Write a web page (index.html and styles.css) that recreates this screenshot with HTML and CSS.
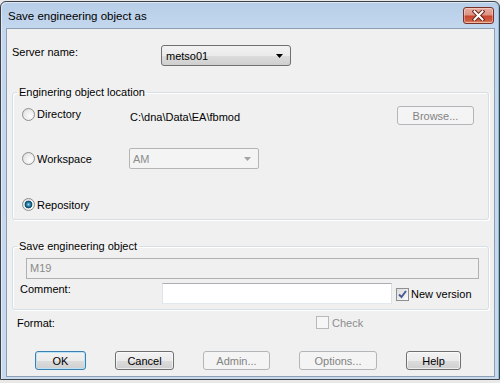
FILE: index.html
```html
<!DOCTYPE html>
<html>
<head>
<meta name="viewport" content="width=device-width, initial-scale=1">
<link rel="stylesheet" href="styles.css">
</head>
<body>

<div class="window">
  <div class="titlebar">
    <span class="title">Save engineering object as</span>
    <button class="close">
      <svg width="13" height="11" viewBox="0 0 13 11">
        <path d="M2.5 1.5 L10.5 9.5 M10.5 1.5 L2.5 9.5" stroke="#6a2418" stroke-width="4" stroke-linecap="square"/>
        <path d="M2.5 1.5 L10.5 9.5 M10.5 1.5 L2.5 9.5" stroke="#ffffff" stroke-width="2" stroke-linecap="square"/>
      </svg>
    </button>
  </div>

  <div class="client">
    <div class="server-row">
      <label class="server-label">Server name:</label>
      <div class="combo">
        <span>metso01</span>
        <svg class="arrow" width="7" height="4" viewBox="0 0 7 4"><polygon points="0,0 7,0 3.5,4" fill="#000"/></svg>
      </div>
    </div>

    <!-- Location group -->
    <fieldset class="group location">
      <legend>Enginering object location</legend>
      <div class="loc-row dir">
        <div class="opt"><span class="radio"></span><span class="opt-label">Directory</span></div>
        <span class="path">C:\dna\Data\EA\fbmod</span>
        <button class="btn disabled browse">Browse...</button>
      </div>
      <div class="loc-row ws">
        <div class="opt"><span class="radio"></span><span class="opt-label">Workspace</span></div>
        <div class="combo disabled">
          <span>AM</span>
          <svg class="arrow" width="7" height="4" viewBox="0 0 7 4"><polygon points="0,0 7,0 3.5,4" fill="#a3a3a3"/></svg>
        </div>
      </div>
      <div class="loc-row repo">
        <div class="opt"><span class="radio checked"></span><span class="opt-label">Repository</span></div>
      </div>
    </fieldset>

    <!-- Save group -->
    <fieldset class="group save">
      <legend>Save engineering object</legend>
      <div class="textbox disabled name">M19</div>
      <div class="comment-row">
        <label class="comment-label">Comment:</label>
        <div class="textbox comment"></div>
        <span class="check checked">
          <svg width="11" height="11" viewBox="0 0 11 11"><path d="M2 5.5 L4.5 8 L9 2" stroke="#4a5c96" stroke-width="2" fill="none"/></svg>
        </span>
        <span class="check-label">New version</span>
      </div>
    </fieldset>

    <div class="format-row">
      <label class="format-label">Format:</label>
      <span class="check disabled"></span>
      <span class="check-label disabled">Check</span>
    </div>

    <div class="buttons">
      <button class="btn default ok">OK</button>
      <button class="btn cancel">Cancel</button>
      <button class="btn disabled admin">Admin...</button>
      <button class="btn disabled options">Options...</button>
      <button class="btn help">Help</button>
    </div>
  </div>
</div>

</body>
</html>
```

FILE: styles.css
```css
body {
  margin: 0;
  background: #e9e9e9;
  font-family: "Liberation Sans", Arial, sans-serif;
  font-size: 11px;
  color: #000;
}

/* Window frame */
.window {
  margin-top: 1px;
  width: 500px;
  height: 379px;
  box-sizing: border-box;
  border: 1px solid #3d4249;
  border-radius: 6px 6px 0 0;
  background: linear-gradient(#b7cee8, #c3d7ee 26px, #c8daef);
  box-shadow: inset -1px 0 0 #86bddc, inset 1px 1px 0 rgba(255,255,255,0.5);
  display: flex;
  flex-direction: column;
  padding-bottom: 2px;
}

.titlebar {
  height: 26px;
  display: flex;
  align-items: flex-start;
  padding: 0 5px 0 7px;
}

.title {
  margin-top: 7px;
  font-size: 11.5px;
  line-height: 14px;
  color: #000;
}

.close {
  margin-left: auto;
  margin-top: 5px;
  width: 31px;
  height: 17px;
  padding: 0;
  border: 1px solid #7a3127;
  border-radius: 3px;
  background: linear-gradient(#e9ab9f 0, #dd9384 45%, #c8462f 55%, #cf5d41 85%, #e2a07d 100%);
  box-shadow: inset 0 0 0 1px rgba(255,255,255,0.35);
  display: flex;
  align-items: center;
  justify-content: center;
}

/* Client area */
.client {
  margin: 0 4px 0 5px;
  height: 349px;
  box-sizing: border-box;
  border: 1px solid #8e9fb3;
  background: #f0f0f0;
  padding: 16px 5px 0 5px;
}

.server-row {
  display: flex;
  align-items: flex-start;
  line-height: 14px;
}

.server-label {
  width: 149px;
}

/* Combo boxes */
.combo {
  width: 130px;
  height: 21px;
  box-sizing: border-box;
  border: 1px solid #707070;
  border-radius: 3px;
  background: linear-gradient(#f2f2f2 0, #ebebeb 50%, #dddddd 50%, #cfcfcf 100%);
  display: flex;
  align-items: center;
  padding: 0 7px 0 4px;
}

.combo .arrow {
  margin-left: auto;
}

.combo.disabled {
  border-color: #b5b5b5;
  background: #f4f4f4;
  color: #8d8d8d;
  border-radius: 2px;
  padding-left: 3px;
}

/* Group boxes */
.group {
  margin: 0;
  border: 1px solid #d5dfe5;
  border-radius: 3px;
  box-shadow: inset 1px 1px 0 #fff, 1px 1px 0 #fff;
  min-width: 0;
}

.group legend {
  padding: 0 2px;
  line-height: 14px;
}

.location {
  margin-top: 19px;
  padding: 7px 14px 4px 4px;
}

.loc-row {
  display: flex;
  margin-left: 5px;
  height: 21px;
}

.loc-row.dir {
  align-items: flex-start;
}

.loc-row.ws {
  margin-top: 21px;
  align-items: center;
}

.loc-row.repo {
  margin-top: 25px;
  align-items: center;
}

.opt {
  width: 108px;
  display: flex;
  align-items: center;
  line-height: 14px;
}

.dir .opt {
  margin-top: 1px;
}

.ws .combo {
  margin-left: -1px;
}

.opt-label {
  margin-left: 2px;
}

.path {
  margin-top: 4px;
  line-height: 14px;
}

.browse {
  margin-left: auto;
  width: 77px;
  height: 21px;
}

/* Radio buttons */
.radio {
  width: 13px;
  height: 13px;
  box-sizing: border-box;
  border: 1px solid #8d8e8e;
  border-radius: 50%;
  background: radial-gradient(circle at 65% 65%, #fdfdfd 0, #e9e9e9 60%, #d3d3d3 100%);
  flex: none;
}

.radio.checked {
  background:
    radial-gradient(circle at 50% 50%, #9cdcf5 0, #3d91bb 1.5px, #14506f 3px, #1c5b7c 3.6px, transparent 4.2px),
    radial-gradient(circle at 65% 65%, #fdfdfd 0, #e9e9e9 60%, #d3d3d3 100%);
}

/* Save group */
.save {
  margin-top: 19px;
  padding: 5px 9px 5px 4px;
}

.textbox {
  height: 21px;
  box-sizing: border-box;
  border: 1px solid #abadb3;
  border-color: #abadb3 #dbdfe6 #e3e9ef #e2e3ea;
  background: #fff;
}

.textbox.name {
  margin-left: 9px;
  border: 1px solid #b0b0b0;
  background: #f0f0f0;
  color: #8a8a8a;
  line-height: 19px;
  padding-left: 3px;
}

.comment-row {
  display: flex;
  align-items: flex-start;
  margin-top: 4px;
  line-height: 14px;
}

.comment-label {
  width: 142px;
  margin-left: 3px;
  margin-top: -1px;
}

.comment {
  width: 230px;
}

/* Check boxes */
.check {
  width: 13px;
  height: 13px;
  box-sizing: border-box;
  border: 1px solid #8e8f8f;
  background: linear-gradient(135deg, #dcdcdc, #fafafa);
  display: flex;
  align-items: center;
  justify-content: center;
  flex: none;
}

.comment-row .check {
  margin-left: 4px;
  margin-top: 5px;
}

.check.disabled {
  border-color: #b8b8b8;
  background: #f6f6f6;
}

.check-label {
  margin-left: 2px;
}

.comment-row .check-label {
  margin-top: 4px;
}

.check-label.disabled {
  color: #8d8d8d;
  margin-left: 3px;
}

.format-row {
  display: flex;
  align-items: flex-start;
  margin-top: 6px;
  line-height: 14px;
}

.format-label {
  width: 299px;
  margin-left: 5px;
}

/* Buttons */
.buttons {
  display: flex;
  gap: 29px;
  margin-top: 21px;
  padding-left: 23px;
}

.btn {
  height: 19px;
  padding: 0;
  font-family: "Liberation Sans", Arial, sans-serif;
  font-size: 11px;
  color: #000;
  border: 1px solid #707070;
  border-radius: 3px;
  background: linear-gradient(#f2f2f2 0, #ebebeb 50%, #dddddd 50%, #cfcfcf 100%);
  box-shadow: inset 0 0 0 1px rgba(255,255,255,0.6);
}

.btn.default {
  border-color: #3c7fb1;
  box-shadow: inset 0 0 0 1px #b9e4f7;
}

.btn.disabled {
  color: #838383;
  border-color: #b3b6b8;
  background: #f4f4f4;
  box-shadow: none;
}

.ok { width: 51px; }
.cancel { width: 59px; }
.admin { width: 67px; }
.options { width: 78px; }
.help { width: 55px; }
```
